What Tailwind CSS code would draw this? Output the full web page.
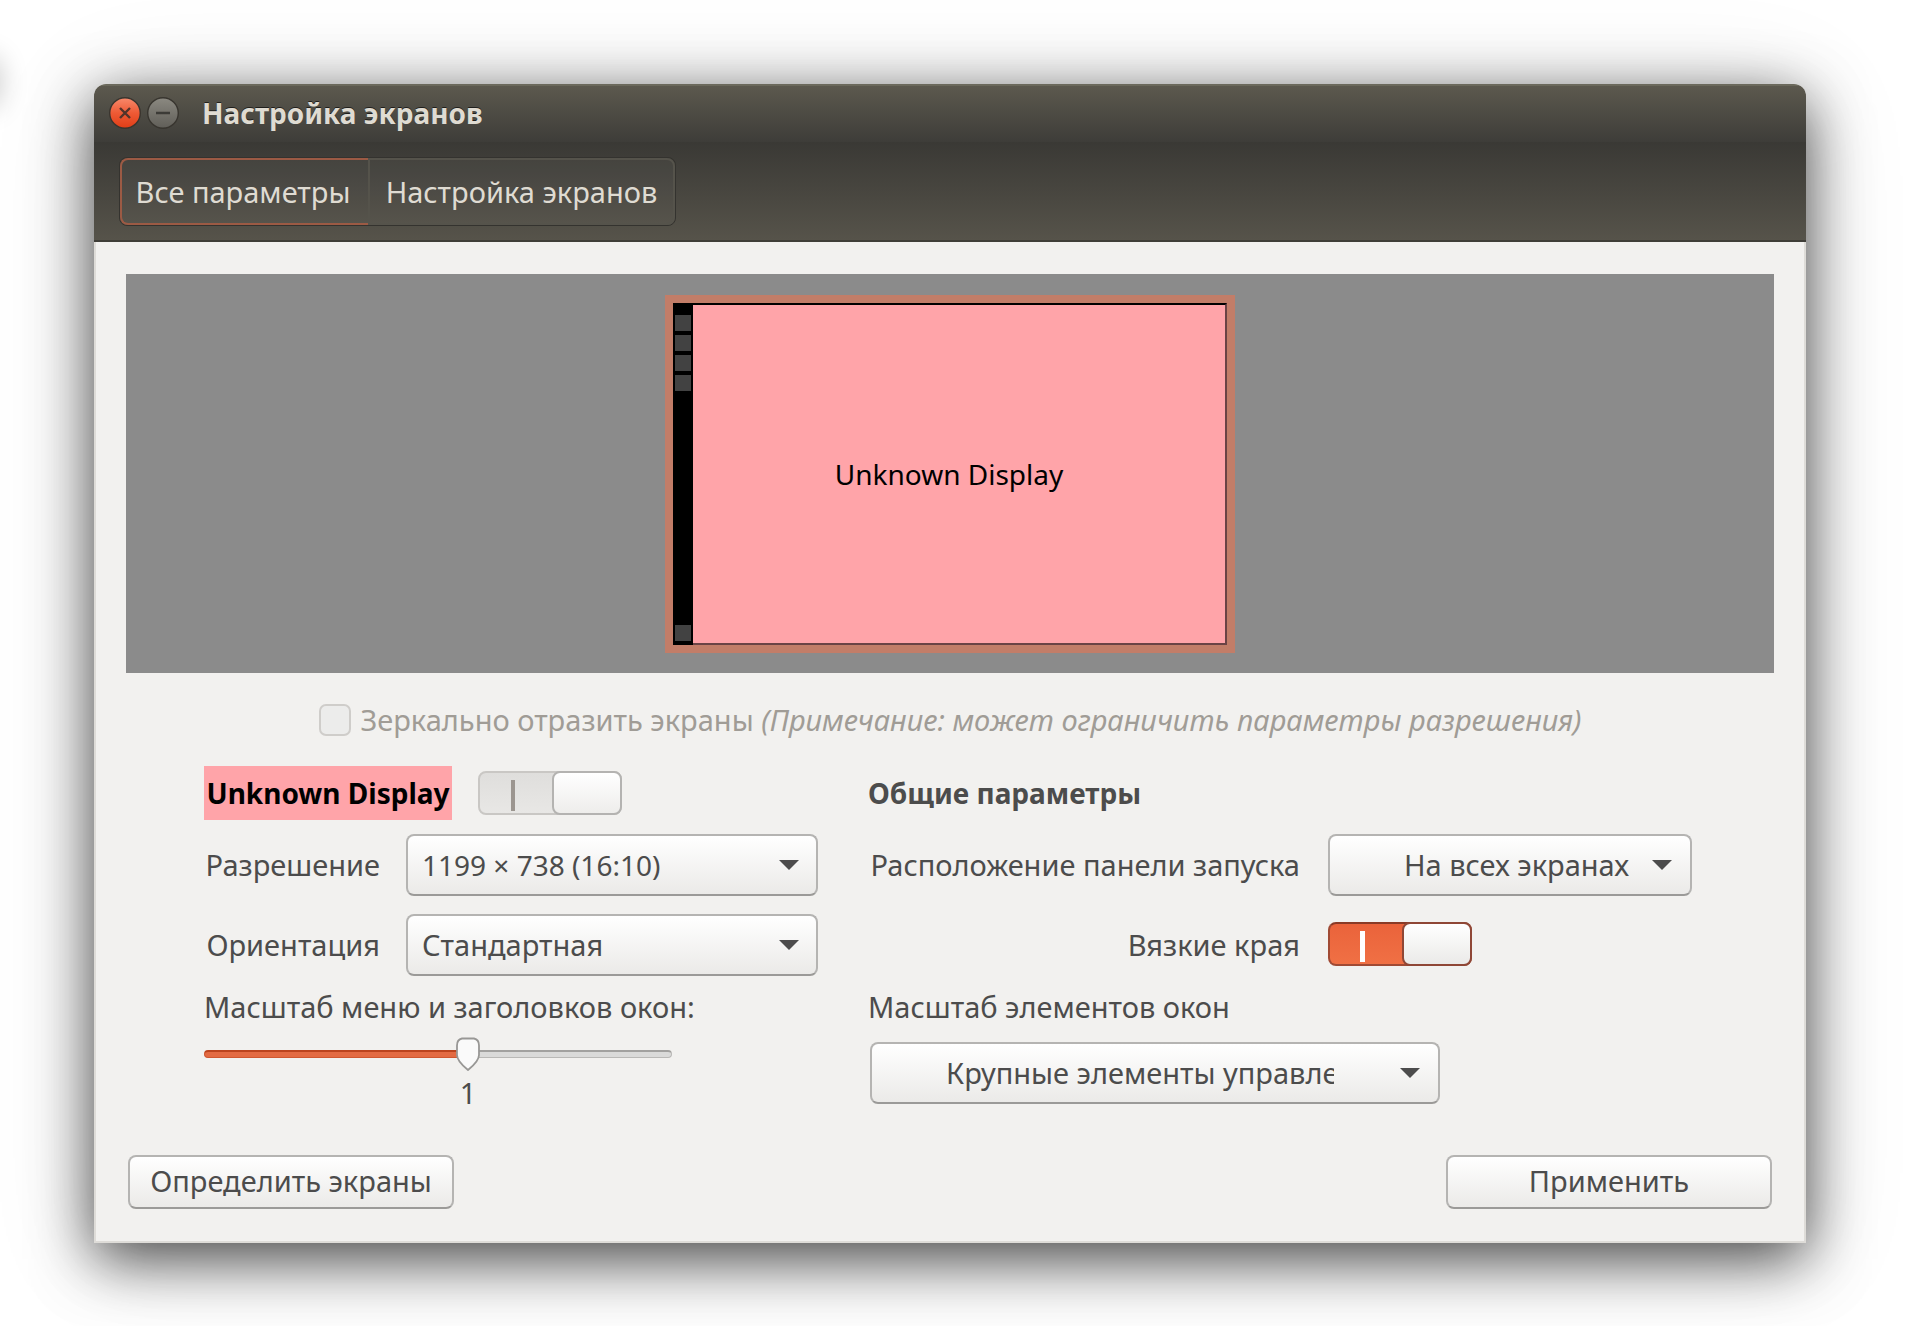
<!DOCTYPE html>
<html lang="ru">
<head>
<meta charset="utf-8">
<meta name="viewport" content="width=device-width, initial-scale=1">
<title>Настройка экранов</title>
<script src="https://cdn.jsdelivr.net/npm/@tailwindcss/browser@4"></script>
</head>
<body class="relative min-h-screen overflow-x-hidden bg-white pt-[84px] pr-[124px] pb-[80px] pl-[94px] font-['Noto_Sans',sans-serif] text-[29px] leading-10 text-[#4c4c4c]">
<!-- shadow of a neighbouring window -->
<div class="absolute top-[60px] -left-6 h-9 w-4 rounded-full shadow-[0_4px_28px_8px_rgba(0,0,0,0.22)]"></div>

<main class="relative rounded-t-xl shadow-[0_16px_60px_rgba(0,0,0,0.7),0_10px_110px_rgba(0,0,0,0.12)]">
  <header class="overflow-hidden rounded-t-xl text-[#dfdbd2]">
    <div class="flex h-[58px] items-center border-t-2 border-[#6b695c] bg-linear-to-b from-[#5c594e] to-[#3e3d39] pb-[2px] pl-[15px]">
      <button aria-label="Закрыть" class="size-8">
        <svg viewBox="0 0 32 32" class="size-8"><defs><linearGradient id="red" x2="0" y2="1"><stop stop-color="#f78a6c"/><stop offset=".5" stop-color="#ee5a35"/><stop offset="1" stop-color="#e03d16"/></linearGradient></defs><circle cx="16" cy="16" r="15.300" fill="url(#red)" stroke="#38352f" stroke-width="1.400"/><path d="M11 11l10 10M21 11L11 21" stroke="#53332a" stroke-width="2.400"/></svg>
      </button>
      <button aria-label="Свернуть" class="ml-[6px] size-8">
        <svg viewBox="0 0 32 32" class="size-8"><defs><linearGradient id="gry" x2="0" y2="1"><stop stop-color="#8b8981"/><stop offset="1" stop-color="#605e58"/></linearGradient></defs><circle cx="16" cy="16" r="15.300" fill="url(#gry)" stroke="#38352f" stroke-width="1.400"/><path d="M9 16h14" stroke="#3c3b37" stroke-width="2.400"/></svg>
      </button>
      <h1 class="ml-[23px] text-[28px] font-bold text-shadow-[0_-1px_0_rgba(0,0,0,0.6)]">Настройка экранов</h1>
    </div>
    <nav class="flex h-[100px] items-start border-b-2 border-[#3f3e38] bg-linear-to-b from-[#3a3935] to-[#56534a] pt-[15px] pl-[25px]">
      <div class="flex h-[69px] rounded-lg border border-[#34332f] text-shadow-[0_-1px_0_rgba(0,0,0,0.6)]">
        <button class="w-[248px] rounded-l-lg border-2 border-r-0 border-[#9c5a44] bg-white/3 pr-1 whitespace-nowrap">Все параметры</button>
        <button class="w-[307px] rounded-r-lg border-2 border-[#55534b] bg-white/3 whitespace-nowrap">Настройка экранов</button>
      </div>
    </nav>
  </header>

  <div class="border-x-2 border-b-2 border-[#dedcd8] bg-[#f2f1ef] px-[30px] pt-8 pb-8">
    <div class="flex h-[399px] items-center justify-center bg-[#8b8b8b]">
      <div class="flex h-[358px] w-[570px] border-8 border-[#c27d68]">
        <div class="flex w-5 flex-col justify-between bg-black px-[2px] pt-3 pb-1">
          <div class="flex flex-col gap-1">
            <div class="h-4 bg-[#424242]"></div>
            <div class="h-4 bg-[#424242]"></div>
            <div class="h-4 bg-[#424242]"></div>
            <div class="h-4 bg-[#424242]"></div>
          </div>
          <div class="h-4 bg-[#424242]"></div>
        </div>
        <div class="flex flex-1 items-center justify-center border-t-2 border-r-2 border-b-2 border-t-black border-r-[#6b4345] border-b-[#6b4345] bg-[#ffa4a9] pr-5 text-[28px] text-black">Unknown Display</div>
      </div>
    </div>

    <label class="mt-[27px] flex items-center justify-center gap-[10px] whitespace-nowrap text-[#a09c96]">
      <input type="checkbox" disabled class="size-8 appearance-none rounded-[7px] border-2 border-[#cfcdca] bg-[#ececeb]">
      <span>Зеркально отразить экраны <i>(Примечание: может ограничить параметры разрешения)</i></span>
    </label>

    <div class="mt-[26px] grid grid-cols-[613px_1fr] gap-x-[51px] pl-[78px]">
      <section>
        <div class="flex items-center gap-[26px]">
          <h2 class="flex h-[54px] w-[248px] items-center justify-center bg-[#ffa4a9] text-[28px] font-bold whitespace-nowrap text-black">Unknown Display</h2>
          <label class="relative flex h-11 w-36">
            <input type="checkbox" role="switch" checked aria-label="Unknown Display" class="h-11 w-36 appearance-none rounded-lg border-2 border-[#c9c7c4] bg-linear-to-b from-[#dfdedc] to-[#e8e7e5]">
            <span class="absolute top-[9px] left-[33px] h-[31px] w-1 bg-[#9c9690]"></span>
            <span class="absolute top-0 right-0 h-11 w-[70px] rounded-lg border-2 border-[#b4b3b1] bg-linear-to-b from-white to-[#eeedeb]"></span>
          </label>
        </div>
        <div class="mt-[14px] grid grid-cols-[176px_412px] items-center gap-x-[26px] gap-y-[18px]">
          <label for="res" class="text-right">Разрешение</label>
          <div class="relative">
            <select id="res" class="block h-[62px] w-full appearance-none rounded-lg border-2 border-[#b5b4b2] border-b-[#9b9a98] bg-linear-to-b from-white to-[#ebeae8] pr-12 pl-[14px] text-[28px]"><option>1199 × 738 (16:10)</option></select>
            <svg viewBox="0 0 20 10" class="pointer-events-none absolute top-[26px] right-[19px] h-[10px] w-5"><path d="M0 0h20L10 10z" fill="#4c4c4c"/></svg>
          </div>
          <label for="rot" class="text-right">Ориентация</label>
          <div class="relative">
            <select id="rot" class="block h-[62px] w-full appearance-none rounded-lg border-2 border-[#b5b4b2] border-b-[#9b9a98] bg-linear-to-b from-white to-[#ebeae8] pr-12 pl-[14px]"><option>Стандартная</option></select>
            <svg viewBox="0 0 20 10" class="pointer-events-none absolute top-[26px] right-[19px] h-[10px] w-5"><path d="M0 0h20L10 10z" fill="#4c4c4c"/></svg>
          </div>
        </div>
        <label for="scale" class="mt-[11px] block">Масштаб меню и заголовков окон:</label>
        <div class="relative mt-[10px] h-[34px] w-[468px]">
          <input id="scale" type="range" min="0" max="100" value="57" class="absolute inset-0 z-10 m-0 opacity-0">
          <div class="flex h-[34px] items-center">
            <div class="h-2 w-[264px] rounded-l-full border border-t-2 border-[#cf5730] border-t-[#bb431d] bg-[#e36a42]"></div>
            <div class="h-2 flex-1 rounded-r-full border border-t-2 border-[#b9b8b6] border-t-[#a2a19f] bg-[#dadad9]"></div>
          </div>
          <svg viewBox="0 0 24 34" class="absolute top-0 left-[252px] h-[34px] w-6"><path d="M6 1.500h12q5 1 5 7V18c0 6-6 11-11 15C7 29 1 24 1 18V8.500q0-6 5-7z" fill="#fafafa" stroke="#989795" stroke-width="1.800"/></svg>
        </div>
        <output for="scale" class="mt-[2px] block w-[528px] text-center">1</output>
      </section>

      <section>
        <h2 class="flex h-[54px] items-center text-[28px] font-bold">Общие параметры</h2>
        <div class="mt-[14px] grid grid-cols-[432px_364px] items-center gap-x-7 gap-y-[18px]">
          <label for="launcher" class="text-right whitespace-nowrap">Расположение панели запуска</label>
          <div class="relative">
            <select id="launcher" class="block h-[62px] w-full appearance-none rounded-lg border-2 border-[#b5b4b2] border-b-[#9b9a98] bg-linear-to-b from-white to-[#ebeae8] pr-12 pl-[74px]"><option>На всех экранах</option></select>
            <svg viewBox="0 0 20 10" class="pointer-events-none absolute top-[26px] right-[20px] h-[10px] w-5"><path d="M0 0h20L10 10z" fill="#4c4c4c"/></svg>
          </div>
          <label for="sticky" class="text-right">Вязкие края</label>
          <div class="flex h-[62px] items-center pb-[2px]">
            <div class="relative h-11 w-36">
              <input id="sticky" type="checkbox" role="switch" checked class="block h-11 w-36 appearance-none rounded-lg border-2 border-[#a04a34] border-t-[#8a3a26] bg-linear-to-b from-[#ea633b] to-[#f07044]">
              <span class="pointer-events-none absolute top-[9px] left-8 h-[31px] w-[5px] bg-white"></span>
              <span class="pointer-events-none absolute top-0 right-0 h-11 w-[70px] rounded-lg border-2 border-[#8f4736] bg-linear-to-b from-white to-[#ebeae8]"></span>
            </div>
          </div>
        </div>
        <label for="apps" class="mt-[11px] block">Масштаб элементов окон</label>
        <div class="relative mt-[15px] ml-[2px] w-[570px]">
          <select id="apps" class="block h-[62px] w-full appearance-none rounded-lg border-2 border-[#b5b4b2] border-b-[#9b9a98] bg-linear-to-b from-white to-[#ebeae8] pr-[104px] pl-[74px]"><option>Крупные элементы управления</option></select>
          <svg viewBox="0 0 20 10" class="pointer-events-none absolute top-[26px] right-[20px] h-[10px] w-5"><path d="M0 0h20L10 10z" fill="#4c4c4c"/></svg>
        </div>
      </section>
    </div>

    <footer class="mt-[42px] flex justify-between px-[2px]">
      <button class="h-[54px] w-[326px] rounded-lg border-2 border-[#b5b4b2] border-b-[#9b9a98] bg-linear-to-b from-white to-[#ebeae8] pb-[2px]">Определить экраны</button>
      <button class="h-[54px] w-[326px] rounded-lg border-2 border-[#b5b4b2] border-b-[#9b9a98] bg-linear-to-b from-white to-[#ebeae8] pb-[2px]">Применить</button>
    </footer>
  </div>
</main>
</body>
</html>
